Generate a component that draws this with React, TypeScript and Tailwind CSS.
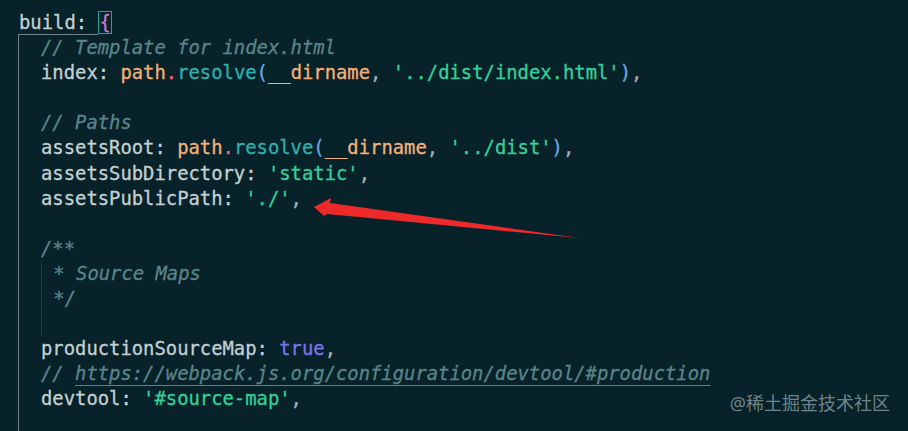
import React from 'react';

const K = ({ children }: { children: React.ReactNode }) => <span className="text-[#c3d0d2]">{children}</span>;
const S = ({ children }: { children: React.ReactNode }) => <span className="text-[#35d09a]">{children}</span>;
const P = () => <span className="text-[#a3b0b4]">,</span>;
const C = ({ children }: { children: React.ReactNode }) => (
  <span className="italic text-[#5b8489]">{children}</span>
);

const Resolve = ({ arg }: { arg: string }) => (
  <>
    <span className="text-[#f2b07a]">path</span>
    <span className="text-[#e8697a]">.</span>
    <span className="text-[#2fb0ad]">resolve</span>
    <span className="text-[#6aa9e0]">(</span>
    <span className="text-[#f2b07a]">__dirname</span>
    <P /> <S>{arg}</S>
    <span className="text-[#6aa9e0]">)</span>
    <P />
  </>
);

const Line = ({ children }: { children?: React.ReactNode }) => (
  <div className="h-[25.1px] leading-[25.1px] whitespace-pre">{children}</div>
);

export default function App() {
  return (
    <div
      className="relative w-[908px] h-[431px] overflow-hidden bg-[#08222a] text-[18.85px] [-webkit-text-stroke:0.3px_currentcolor]"
      style={{ fontFamily: '"DejaVu Sans Mono", "Liberation Mono", monospace' }}
    >
      <div className="pt-[10px] pl-[19px]">
        <Line>
          <K>build: </K>
          <span className="border border-[#2a9ea0] text-[#c678dd]">{'{'}</span>
        </Line>
        <div className="-ml-px border-l border-[#6e8488] pl-[22px]">
          <div className="-ml-[22px] -mt-[1px] h-0 w-[79px] border-t border-[#6e8488]" />
          <Line><C>// Template for index.html</C></Line>
          <Line><K>index: </K><Resolve arg="'../dist/index.html'" /></Line>
          <Line />
          <Line><C>// Paths</C></Line>
          <Line><K>assetsRoot: </K><Resolve arg="'../dist'" /></Line>
          <Line><K>assetsSubDirectory: </K><S>'static'</S><P /></Line>
          <Line><K>assetsPublicPath: </K><S>'./'</S><P /></Line>
          <Line />
          <Line><C>/**</C></Line>
          <div className="border-l border-[#1d3a41]">
            <Line><C> * Source Maps</C></Line>
            <Line><C> */</C></Line>
            <Line />
          </div>
          <Line>
            <K>productionSourceMap: </K>
            <span className="text-[#7a74e6]">true</span>
            <P />
          </Line>
          <Line>
            <C>// </C>
            <span className="italic text-[#5b8489] underline underline-offset-[5px] decoration-[#5b8489]">
              https://webpack.js.org/configuration/devtool/#production
            </span>
          </Line>
          <Line><K>devtool: </K><S>'#source-map'</S><P /></Line>
          <Line />
        </div>
      </div>

      <svg className="absolute left-0 top-0" width="908" height="431">
        <polygon
          points="314,207 331,198 330,203 579,238 327,214 324,216"
          fill="#ec2a2b"
        />
      </svg>

      <div
        className="absolute right-[18px] bottom-[14px] text-[18px] text-[#6f8488] [-webkit-text-stroke:0px]"
        style={{ fontFamily: '"Noto Sans", "Noto Sans CJK SC", sans-serif' }}
      >
        @稀土掘金技术社区
      </div>
    </div>
  );
}
